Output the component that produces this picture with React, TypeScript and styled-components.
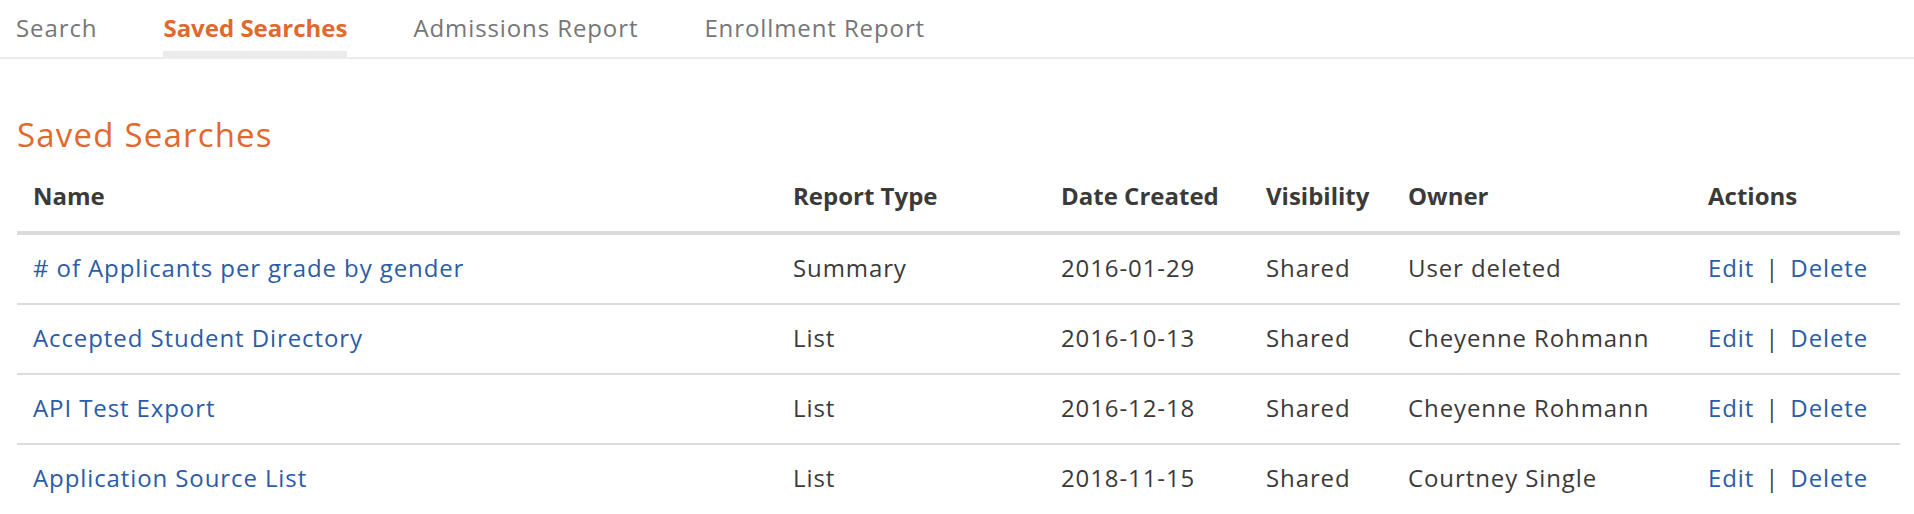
import React from 'react';
import styled, { createGlobalStyle } from 'styled-components';

const GlobalStyle = createGlobalStyle`
  html, body {
    margin: 0;
    padding: 0;
    background: #fff;
  }
  body {
    font-family: "Open Sans", Lato, sans-serif;
    color: #3b3a39;
  }
`;

const TabBar = styled.nav`
  display: flex;
  gap: 66px;
  padding: 14px 0 0 16px;
  border-bottom: 2px solid #ececec;
`;

const Tab = styled.a<{ active?: boolean }>`
  display: block;
  font-size: 24px;
  line-height: 28.8px;
  padding-bottom: 8px;
  border-bottom: 6px solid ${p => (p.active ? '#ebebeb' : 'transparent')};
  color: ${p => (p.active ? '#e0692d' : '#767676')};
  font-weight: ${p => (p.active ? 700 : 400)};
  letter-spacing: ${p => (p.active ? 0 : 0.9)}px;
  text-decoration: none;
  cursor: pointer;
`;

const Content = styled.main`
  padding: 0 14px 0 17px;
`;

const Heading = styled.h1`
  margin: 56px 0 19px;
  font-size: 33px;
  line-height: 39.6px;
  font-weight: 400;
  letter-spacing: 1.2px;
  color: #e0692d;
`;

const Table = styled.table`
  width: 100%;
  border-collapse: collapse;
  table-layout: fixed;
  font-size: 24px;
`;

const HeadCell = styled.th`
  text-align: left;
  font-weight: 700;
  color: #3b3a39;
  line-height: 28.8px;
  padding: 9px 16px 20px;
  border-bottom: 4px solid #dcdcdc;
  white-space: nowrap;
`;

const Row = styled.tr`
  & + & td {
    border-top: 2px solid #dcdcdc;
  }
`;

const Cell = styled.td`
  line-height: 29px;
  padding: 18px 16px 21px;
  color: #3b3a39;
  letter-spacing: 0.9px;
  white-space: nowrap;
`;

const Link = styled.a`
  color: #2b5ca7;
  text-decoration: none;
  cursor: pointer;
`;

const Pipe = styled.span`
  color: #444;
  margin: 0 11px;
`;

const columns = [
  { label: 'Name', width: 760 },
  { label: 'Report Type', width: 268 },
  { label: 'Date Created', width: 205 },
  { label: 'Visibility', width: 142 },
  { label: 'Owner', width: 300 },
  { label: 'Actions', width: 208 },
];

const searches = [
  { name: '# of Applicants per grade by gender', type: 'Summary', date: '2016-01-29', visibility: 'Shared', owner: 'User deleted' },
  { name: 'Accepted Student Directory', type: 'List', date: '2016-10-13', visibility: 'Shared', owner: 'Cheyenne Rohmann' },
  { name: 'API Test Export', type: 'List', date: '2016-12-18', visibility: 'Shared', owner: 'Cheyenne Rohmann' },
  { name: 'Application Source List', type: 'List', date: '2018-11-15', visibility: 'Shared', owner: 'Courtney Single' },
];

const tabs = ['Search', 'Saved Searches', 'Admissions Report', 'Enrollment Report'];

const App: React.FC = () => (
  <>
    <GlobalStyle />
    <TabBar>
      {tabs.map(t => (
        <Tab key={t} active={t === 'Saved Searches'}>{t}</Tab>
      ))}
    </TabBar>
    <Content>
      <Heading>Saved Searches</Heading>
      <Table>
        <colgroup>
          {columns.map(c => (
            <col key={c.label} style={{ width: c.width }} />
          ))}
        </colgroup>
        <thead>
          <tr>
            {columns.map(c => (
              <HeadCell key={c.label}>{c.label}</HeadCell>
            ))}
          </tr>
        </thead>
        <tbody>
          {searches.map(s => (
            <Row key={s.name}>
              <Cell><Link>{s.name}</Link></Cell>
              <Cell>{s.type}</Cell>
              <Cell>{s.date}</Cell>
              <Cell>{s.visibility}</Cell>
              <Cell>{s.owner}</Cell>
              <Cell>
                <Link>Edit</Link>
                <Pipe>|</Pipe>
                <Link>Delete</Link>
              </Cell>
            </Row>
          ))}
        </tbody>
      </Table>
    </Content>
  </>
);

export default App;
